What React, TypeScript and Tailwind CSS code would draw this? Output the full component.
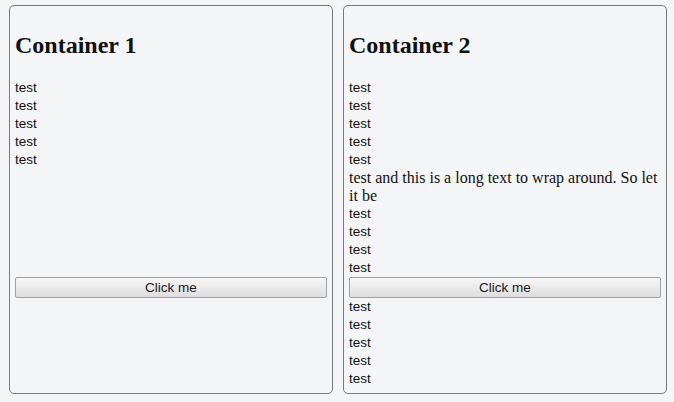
import React from "react";

const sans = { fontFamily: '"Liberation Sans", Arial, sans-serif' };

function Lines({ n }: { n: number }) {
  return (
    <>
      {Array.from({ length: n }).map((_, i) => (
        <div key={i} className="text-[13.5px] leading-[18px]" style={sans}>
          test
        </div>
      ))}
    </>
  );
}

function Btn() {
  return (
    <button
      className="block w-full h-[21px] border border-[#a0a0a0] rounded-[2px] bg-gradient-to-b from-[#f7f7f7] to-[#dddddd] text-[13.5px] leading-[19px] text-[#1a1a1a]"
      style={sans}
    >
      Click me
    </button>
  );
}

export default function App() {
  return (
    <div
      className="min-h-[402px] w-[674px] bg-[#f4f5f7] pt-[5px] pl-[9px] text-[#111]"
      style={{ fontFamily: '"Liberation Serif", "Times New Roman", serif' }}
    >
      <div className="grid grid-cols-[324px_324px] grid-rows-[auto_auto_auto_auto] gap-x-[10px]">
        <div className="row-span-4 grid grid-rows-subgrid border border-[#7a7a7a] rounded-[5px] p-[5px] bg-[#f4f5f7]">
          <h2 className="mt-[16px] mb-[16px] text-[24px] font-bold leading-normal">Container 1</h2>
          <div>
            <Lines n={5} />
          </div>
          <div>
            <Btn />
          </div>
          <div />
        </div>
        <div className="row-span-4 grid grid-rows-subgrid border border-[#7a7a7a] rounded-[5px] p-[5px] bg-[#f4f5f7]">
          <h2 className="mt-[16px] mb-[16px] text-[24px] font-bold leading-normal">Container 2</h2>
          <div>
            <Lines n={5} />
            <div className="text-[16px] leading-[18px]">
              test and this is a long text to wrap around. So let it be
            </div>
            <Lines n={4} />
          </div>
          <div>
            <Btn />
          </div>
          <div>
            <Lines n={5} />
          </div>
        </div>
      </div>
    </div>
  );
}
